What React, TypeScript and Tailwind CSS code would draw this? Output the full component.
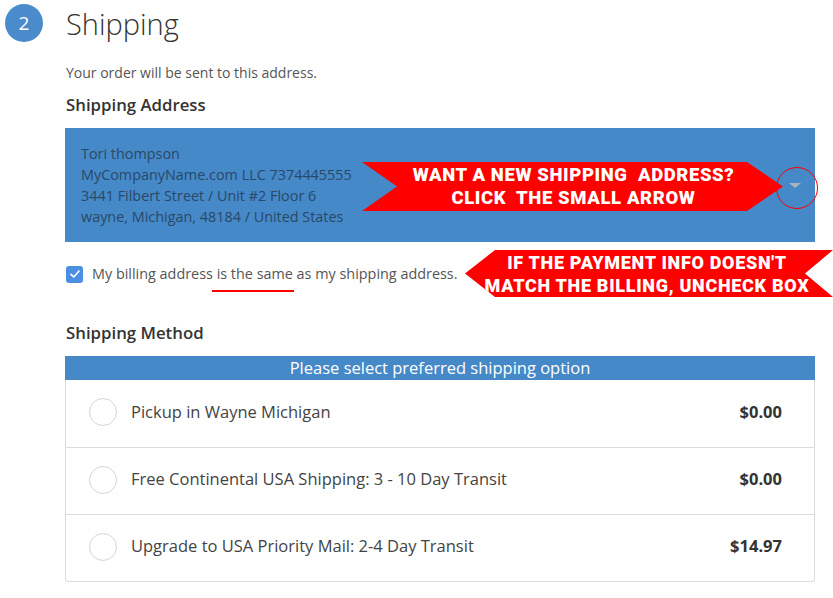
import React from "react";

const options = [
  { label: "Pickup in Wayne Michigan", price: "$0.00" },
  { label: "Free Continental USA Shipping: 3 - 10 Day Transit", price: "$0.00" },
  { label: "Upgrade to USA Priority Mail: 2-4 Day Transit", price: "$14.97" },
];

export default function App() {
  return (
    <div className="relative w-[833px] h-[598px] overflow-hidden bg-white font-['Open_Sans',sans-serif] text-[#333]">
      {/* Header */}
      <div className="flex items-center h-[44px] pt-[2px]">
        <div className="ml-[5px] w-[38px] h-[38px] rounded-full bg-[#4a8ccb] text-white flex items-center justify-center text-[19px]">
          2
        </div>
        <h1 className="ml-[23px] text-[29px] font-light leading-none text-[#333]">Shipping</h1>
      </div>

      <div className="pl-[65px] pr-[18px]">
        <p className="mt-[19px] ml-[1px] text-[14px] leading-[20px] text-[#555]">Your order will be sent to this address.</p>
        <h2 className="mt-[10px] ml-[1px] text-[16.8px] leading-[24px] font-semibold text-[#333]">Shipping Address</h2>

        <div className="mt-[11px] h-[114px] bg-[#4589c8] flex items-center justify-between pl-[16px] pr-[14px]">
          <div className="text-[14.4px] leading-[21px] text-[#2a4867]">
            <div>Tori thompson</div>
            <div>MyCompanyName.com LLC 7374445555</div>
            <div>3441 Filbert Street / Unit #2 Floor 6</div>
            <div>wayne, Michigan, 48184 / United States</div>
          </div>
          <div className="w-0 h-0 border-l-[6px] border-r-[6px] border-t-[5px] border-l-transparent border-r-transparent border-t-[#aab4be]" />
        </div>

        <div className="mt-[22px] h-[20px] flex items-center">
          <div className="ml-[1px] w-[17px] h-[17px] rounded-[3px] bg-[#4a8fe0] flex items-center justify-center">
            <svg width="12" height="12" viewBox="0 0 12 12" fill="none">
              <path d="M2 6.3 L4.8 9 L10 3" stroke="white" strokeWidth="1.6" strokeLinecap="round" strokeLinejoin="round" />
            </svg>
          </div>
          <span className="ml-[9px] text-[14.4px] text-[#555]">My billing address is the same as my shipping address.</span>
        </div>

        <h2 className="mt-[37px] ml-[1px] text-[16.8px] leading-[24px] font-semibold text-[#333]">Shipping Method</h2>

        <div className="mt-[11px] h-[24px] bg-[#4589c8] flex items-center justify-center text-white text-[16.5px]">
          Please select preferred shipping option
        </div>
        <div className="border border-t-0 border-[#dcdcdc] rounded-b-[3px]">
          {options.map((o, i) => (
            <div
              key={o.label}
              className={`h-[67px] flex items-center pl-[23px] pr-[32px] pb-[3px] ${i > 0 ? "border-t border-[#dcdcdc]" : ""}`}
            >
              <div className="w-[28px] h-[28px] rounded-full border border-[#d4d4d4] bg-white" />
              <span className="ml-[14px] flex-1 text-[16.5px] text-[#444]">{o.label}</span>
              <span className="text-[16.5px] font-bold text-[#333]">{o.price}</span>
            </div>
          ))}
        </div>
      </div>

      {/* Annotations */}
      <div className="absolute left-[212px] top-[290px] w-[82px] h-[2px] bg-[#ff0000]" />
      <div className="absolute left-[776px] top-[167px] w-[42px] h-[42px] rounded-full border border-[#ff0000]" />

      <div className="absolute left-[362px] top-[162px] w-[421px] h-[49px] bg-[#ff0000] [clip-path:polygon(0_0,385px_0,100%_50%,385px_100%,0_100%,35px_50%)] flex flex-col items-center justify-center text-white font-['Roboto',sans-serif] font-black uppercase text-[18.5px] leading-[23px] tracking-[0.6px] pl-[14px] pr-[12px]">
        <div className="whitespace-pre">WANT A NEW SHIPPING  ADDRESS?</div>
        <div className="whitespace-pre">CLICK  THE SMALL ARROW</div>
      </div>

      <div className="absolute left-[465px] top-[250px] w-[368px] h-[47px] bg-[#ff0000] [clip-path:polygon(30px_0,100%_0,340px_50%,100%_100%,30px_100%,0_50%)] flex flex-col items-center justify-center text-white font-['Roboto',sans-serif] font-black uppercase text-[18px] leading-[23px] tracking-[0.7px] pl-[14px] pr-[18px]">
        <div className="whitespace-pre">IF THE PAYMENT INFO DOESN'T</div>
        <div className="whitespace-pre">MATCH THE BILLING, UNCHECK BOX</div>
      </div>
    </div>
  );
}
